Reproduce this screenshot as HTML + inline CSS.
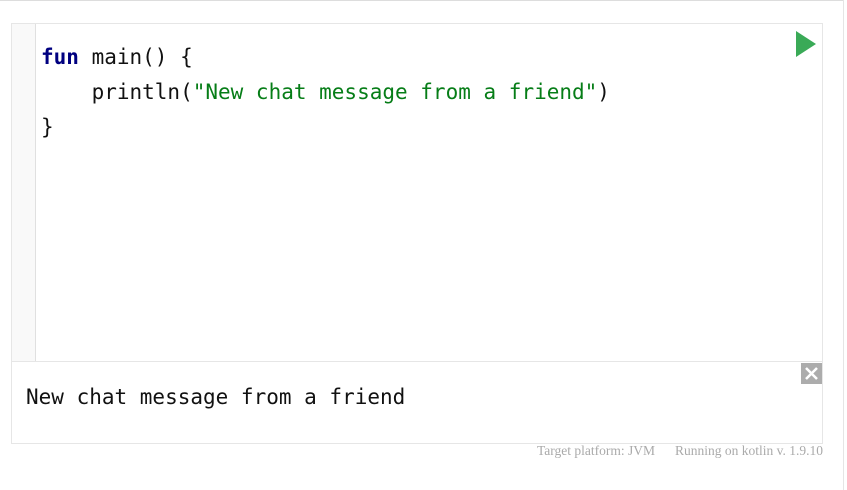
<!DOCTYPE html>
<html><head><style>
body{margin:0;width:847px;height:490px;background:#fff;position:relative;overflow:hidden}
.top{position:absolute;left:0;top:0;width:844px;height:1px;background:#ddd}
.rb{position:absolute;left:843px;top:0;width:1px;height:490px;background:#e5e5e5}
.ed{position:absolute;left:11px;top:23px;width:810px;height:338px;border:1px solid #e6e6e6;border-bottom:none}
.gut{position:absolute;left:0;top:0;width:23px;height:338px;background:#f9f9f9;border-right:1px solid #e0e0e0}
.code{position:absolute;left:29px;top:16px;font-family:"DejaVu Sans Mono",monospace;font-size:21px;line-height:35px;color:#111;white-space:pre}
.k{color:#000080;font-weight:bold}.s{color:#067d17}
.out{position:absolute;left:11px;top:361px;width:810px;height:81px;border:1px solid #e6e6e6}
.otext{position:absolute;left:14px;top:23px;font-family:"DejaVu Sans Mono",monospace;font-size:21px;color:#111;white-space:pre}
.x{position:absolute;left:789px;top:1px;width:21px;height:21px;background:#acacac}
.foot{position:absolute;top:443px;font-family:"Liberation Serif",serif;font-size:13.5px;color:#aaa}
</style></head><body>
<div class="top"></div><div class="rb"></div>
<div class="ed"><div class="gut"></div>
<div class="code"><span class="k">fun</span> main() {
    println(<span class="s">"New chat message from a friend"</span>)
}</div>
<svg style="position:absolute;left:783px;top:6px" width="22" height="28"><polygon points="1,1 21,14 1,27" fill="#3aaa57"/></svg>
</div>
<div class="out"><div class="otext">New chat message from a friend</div>
<div class="x"><svg width="21" height="21"><path d="M5 5L16 16M16 5L5 16" stroke="#fff" stroke-width="2.5"/></svg></div></div>
<div class="foot" style="left:537px">Target platform: JVM</div>
<div class="foot" style="left:675px">Running on kotlin v. 1.9.10</div>
</body></html>
